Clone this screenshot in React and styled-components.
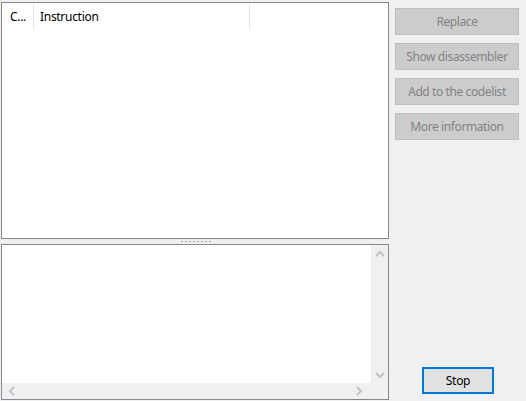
import React from "react";
import styled, { createGlobalStyle } from "styled-components";

const Global = createGlobalStyle`
  html, body { margin: 0; padding: 0; background: #f0f0f0; }
  body { font-family: "Noto Sans", "Open Sans", "Liberation Sans", sans-serif; font-size: 12px; }
`;

const Window = styled.div`
  width: 526px;
  height: 401px;
  box-sizing: border-box;
  display: flex;
  padding: 2px 0 0 1px;
  gap: 6px;
  overflow: hidden;
`;

const LeftCol = styled.div`
  width: 388px;
  display: flex;
  flex-direction: column;
`;

const ListBox = styled.div`
  height: 237px;
  box-sizing: border-box;
  border: 1px solid #828790;
  background: #fff;
`;

const Header = styled.div`
  display: flex;
  height: 26px;
  padding-top: 1px;
  box-sizing: border-box;
`;

const HeaderCell = styled.div`
  width: ${(p) => p.$w}px;
  box-sizing: border-box;
  padding-left: ${(p) => p.$pl}px;
  border-right: 1px solid #e5e5e5;
  display: flex;
  align-items: center;
  color: #000;
  font-size: 12px;
  letter-spacing: -0.3px;
  white-space: nowrap;
`;

const Splitter = styled.div`
  height: 5px;
  display: flex;
  align-items: center;
  justify-content: center;
  padding-left: 2px;
`;

const Grip = styled.div`
  width: 30px;
  height: 1px;
  background-image: linear-gradient(to right, #a8a8a8 2px, transparent 2px);
  background-size: 4px 1px;
`;

const TextBox = styled.div`
  flex: 1;
  box-sizing: border-box;
  border: 1px solid #828790;
  background: #fff;
  display: grid;
  grid-template-columns: 1fr 17px;
  grid-template-rows: 1fr 16px;
  margin-bottom: 1px;
`;

const VScroll = styled.div`
  background: #f0f0f0;
  display: flex;
  flex-direction: column;
  justify-content: space-between;
  align-items: center;
  padding: 5px 0 4px;
`;

const HScroll = styled.div`
  background: #f0f0f0;
  display: flex;
  justify-content: space-between;
  align-items: center;
  padding: 0 8px 0 6px;
`;

const Corner = styled.div`
  background: #f0f0f0;
`;

const RightCol = styled.div`
  width: 124px;
  display: flex;
  flex-direction: column;
  gap: 8px;
  padding-top: 6px;
`;

const DisabledButton = styled.div`
  height: 27px;
  box-sizing: border-box;
  border: 1px solid #bfbfbf;
  background: #cccccc;
  color: #838383;
  display: flex;
  align-items: center;
  justify-content: center;
  font-size: 12px;
  letter-spacing: -0.4px;
  white-space: nowrap;
`;

const Spacer = styled.div`
  flex: 1;
`;

const StopButton = styled.div`
  align-self: flex-start;
  margin-left: 27px;
  margin-bottom: 7px;
  width: 72px;
  height: 27px;
  box-sizing: border-box;
  border: 2px solid #0078d7;
  background: #e1e1e1;
  color: #000;
  display: flex;
  align-items: center;
  justify-content: center;
  font-size: 12px;
  letter-spacing: -0.3px;
`;

const Chevron = ({ dir }) => {
  const d = {
    up: "M1 6 L5 2 L9 6",
    down: "M1 2 L5 6 L9 2",
    left: "M6 1 L2 5 L6 9",
    right: "M2 1 L6 5 L2 9",
  }[dir];
  const w = dir === "up" || dir === "down" ? 10 : 8;
  const h = dir === "up" || dir === "down" ? 8 : 10;
  return (
    <svg width={w} height={h} viewBox={`0 0 ${w} ${h}`}>
      <path d={d} fill="none" stroke="#c2c2c2" strokeWidth="2" />
    </svg>
  );
};

export default function App() {
  return (
    <>
      <Global />
      <Window>
        <LeftCol>
          <ListBox>
            <Header>
              <HeaderCell $w={32} $pl={8}>C...</HeaderCell>
              <HeaderCell $w={216} $pl={6}>Instruction</HeaderCell>
            </Header>
          </ListBox>
          <Splitter>
            <Grip />
          </Splitter>
          <TextBox>
            <div />
            <VScroll>
              <Chevron dir="up" />
              <Chevron dir="down" />
            </VScroll>
            <HScroll>
              <Chevron dir="left" />
              <Chevron dir="right" />
            </HScroll>
            <Corner />
          </TextBox>
        </LeftCol>
        <RightCol>
          <DisabledButton>Replace</DisabledButton>
          <DisabledButton>Show disassembler</DisabledButton>
          <DisabledButton>Add to the codelist</DisabledButton>
          <DisabledButton>More information</DisabledButton>
          <Spacer />
          <StopButton>Stop</StopButton>
        </RightCol>
      </Window>
    </>
  );
}
